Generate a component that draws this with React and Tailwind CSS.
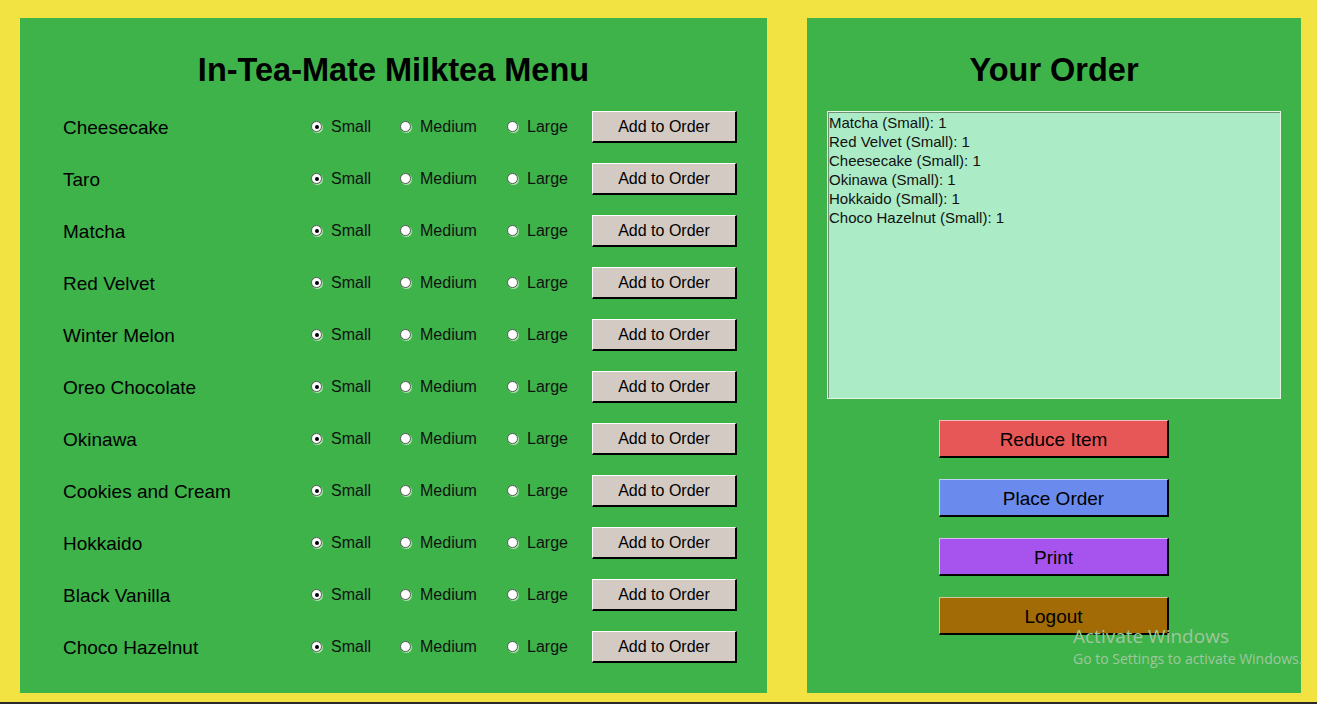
const ITEMS = [
  'Cheesecake',
  'Taro',
  'Matcha',
  'Red Velvet',
  'Winter Melon',
  'Oreo Chocolate',
  'Okinawa',
  'Cookies and Cream',
  'Hokkaido',
  'Black Vanilla',
  'Choco Hazelnut',
]

const ORDER = [
  'Matcha (Small): 1',
  'Red Velvet (Small): 1',
  'Cheesecake (Small): 1',
  'Okinawa (Small): 1',
  'Hokkaido (Small): 1',
  'Choco Hazelnut (Small): 1',
]

const ACTIONS = [
  { label: 'Reduce Item', cls: 'bg-[#e85757]' },
  { label: 'Place Order', cls: 'bg-[#6a8bed]' },
  { label: 'Print', cls: 'bg-[#a754ee]' },
  { label: 'Logout', cls: 'bg-[#a26b05]' },
]

function Radio({ checked, label, width }) {
  return (
    <div className={`flex items-center gap-[9px] ${width}`}>
      <span className="w-[11px] h-[11px] -mt-[1px] rounded-full bg-white border border-[#555] flex items-center justify-center shadow-[1px_1px_0_#a8e0a8]">
        {checked && <span className="w-[4px] h-[4px] rounded-full bg-black" />}
      </span>
      <span className="text-[16px] text-[#111]">{label}</span>
    </div>
  )
}

export default function App() {
  return (
    <div className="w-[1317px] h-[704px] bg-[#f2e342] flex flex-col overflow-hidden relative font-['Liberation_Sans',Arial,sans-serif] text-black">
      <div className="flex gap-[40px] pt-[18px] pl-[20px] h-[702px]">
        {/* Menu */}
        <div className="w-[747px] h-[675px] bg-[#3eb34a] flex flex-col">
          <div className="h-[83px] pt-[34px] text-center text-[32.5px] leading-[36px] font-bold">
            In-Tea-Mate Milktea Menu
          </div>
          <div className="flex flex-col pl-[43px]">
            {ITEMS.map((name) => (
              <div key={name} className="h-[52px] flex items-center">
                <div className="w-[248px] text-[19px] pt-[2px]">{name}</div>
                <Radio checked label="Small" width="w-[89px]" />
                <Radio label="Medium" width="w-[107px]" />
                <Radio label="Large" width="w-[85px]" />
                <button className="w-[145px] h-[32px] pt-[1px] bg-[#d3cac4] text-[16px] border-t border-l border-white border-r-2 border-b-2 border-r-black border-b-black">
                  Add to Order
                </button>
              </div>
            ))}
          </div>
        </div>

        {/* Order */}
        <div className="w-[494px] h-[675px] bg-[#3eb34a] flex flex-col items-center">
          <div className="h-[93px] pt-[34px] text-center text-[32.5px] leading-[36px] font-bold">
            Your Order
          </div>
          <div className="w-[454px] h-[288px] border border-[#e6f6e6]">
            <div className="w-full h-full bg-[#abebc6] border-t border-l border-[#6f8f78] text-[15px] leading-[19px] text-[#111]">
              {ORDER.map((line) => (
                <div key={line}>{line}</div>
              ))}
            </div>
          </div>
          <div className="flex flex-col gap-[21px] mt-[21px]">
            {ACTIONS.map(({ label, cls }) => (
              <button
                key={label}
                className={`w-[230px] h-[38px] pt-[3px] text-[19px] ${cls} border-t border-l border-white/60 border-r-2 border-b-2 border-r-black border-b-black`}
              >
                {label}
              </button>
            ))}
          </div>
        </div>
      </div>
      <div className="h-[2px] bg-[#2a2a2a]" />

      {/* watermark */}
      <div className="absolute left-[1073px] top-[624px] text-[#9ec79e] font-['Open_Sans',sans-serif] pointer-events-none">
        <div className="text-[19px] leading-[24px]">Activate Windows</div>
        <div className="text-[14px] leading-[20px] mt-[1px]">Go to Settings to activate Windows.</div>
      </div>
    </div>
  )
}
